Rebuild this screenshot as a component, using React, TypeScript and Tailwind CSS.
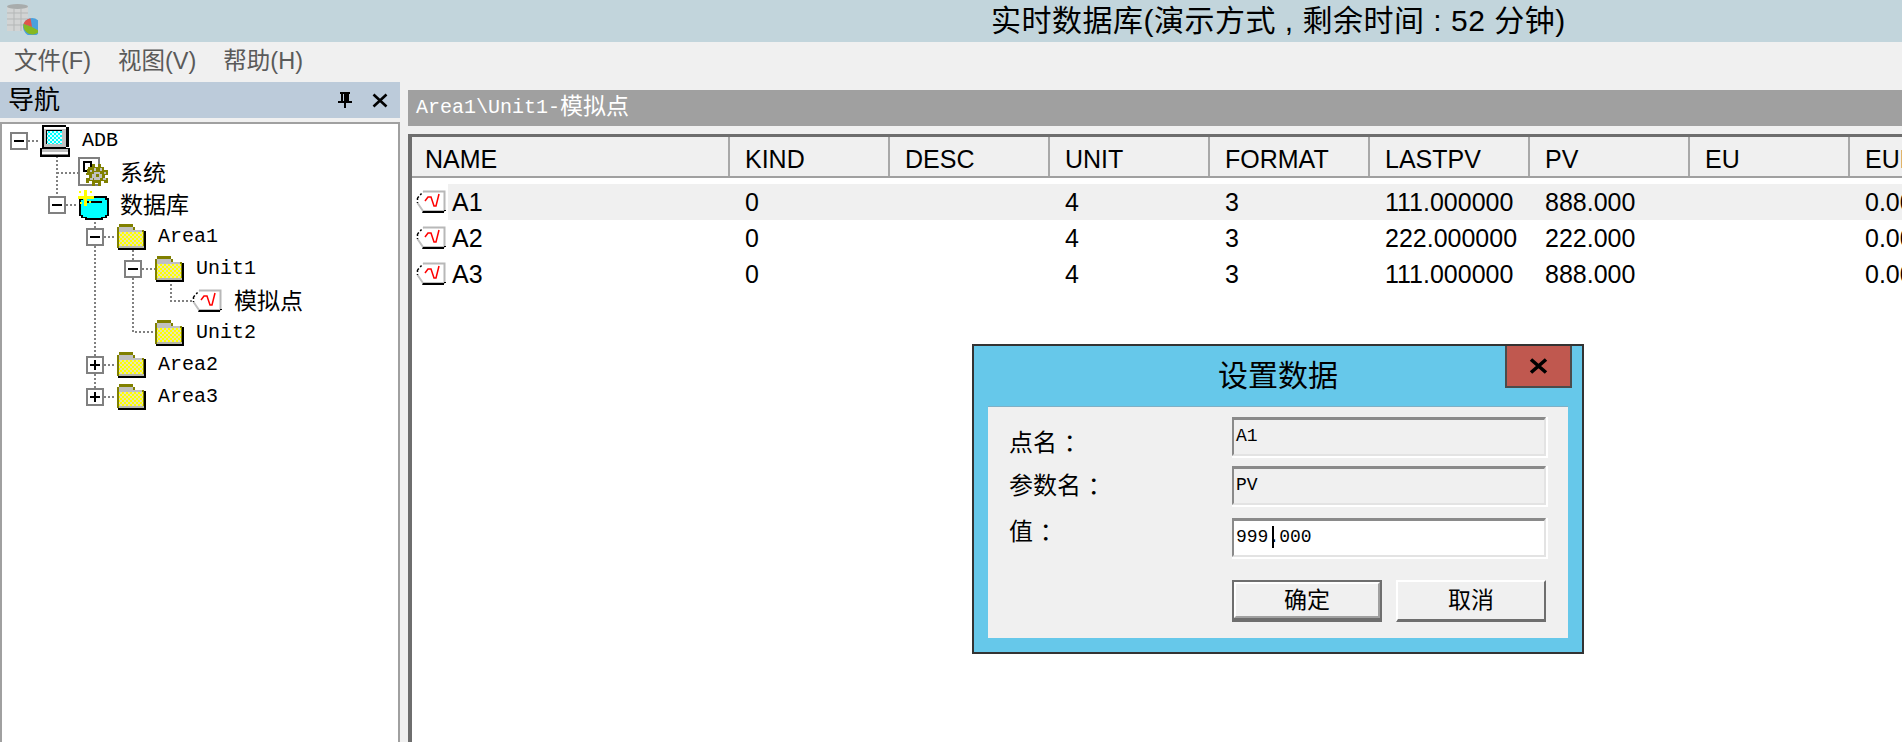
const sans = "font-['Liberation_Sans','Noto_Sans_CJK_SC',sans-serif]";
const mono = "font-['Liberation_Mono','Noto_Sans_CJK_SC',monospace]";

const columns = ["KIND", "DESC", "UNIT", "FORMAT", "LASTPV", "PV", "EU", "EULO"];
const rows = [
  { name: "A1", cells: ["0", "", "4", "3", "111.000000", "888.000", "", "0.000000"] },
  { name: "A2", cells: ["0", "", "4", "3", "222.000000", "222.000", "", "0.000000"] },
  { name: "A3", cells: ["0", "", "4", "3", "111.000000", "888.000", "", "0.000000"] },
];

function Dither({ id, a, b }: { id: string; a: string; b: string }) {
  return (
    <pattern id={id} width="4" height="4" patternUnits="userSpaceOnUse">
      <rect width="4" height="4" fill={a} />
      <rect width="2" height="2" fill={b} />
      <rect x="2" y="2" width="2" height="2" fill={b} />
    </pattern>
  );
}

function AppIcon() {
  return (
    <svg width="32" height="32" viewBox="0 0 32 32" className="blur-[0.7px]">
      <path d="M1 3h21v25H1z" fill="#d2d4d4" />
      <ellipse cx="11.500" cy="3.500" rx="10.500" ry="2.500" fill="#a8acac" />
      <path d="M1 10h21M1 16h21M1 22h21M8 6v22M15 6v22" stroke="#b4b7b7" strokeWidth="1" />
      <circle cx="26" cy="24" r="9" fill="#4aa0dc" />
      <path d="M26 24l-8.500-3a9 9 0 0 1 7-5.800z" fill="#e0554a" />
      <path d="M26 24l-8.500-3a9 9 0 0 0 16 7z" fill="#86b821" />
    </svg>
  );
}

function ComputerIcon() {
  return (
    <svg width="30" height="32" viewBox="0 0 30 32" shapeRendering="crispEdges">
      <defs>
        <Dither id="screen" a="#00ffff" b="#d8ffff" />
      </defs>
      <path d="M2 0h24v2h3v20h-3v2H2z" fill="#000" />
      <path d="M4 2h22v20H4z" fill="#c0c0c0" />
      <path d="M4 2h22v2H4z" fill="#ffffff" />
      <path d="M6 5h16v14H6z" fill="#000" />
      <path d="M7 6h15v13H7z" fill="url(#screen)" />
      <path d="M0 23h30v9H0z" fill="#000" />
      <path d="M2 24h26v3H2z" fill="#c0c0c0" />
      <path d="M2 27h26v2H2z" fill="#ffffff" />
      <path d="M2 29h26v1H2z" fill="#808080" />
    </svg>
  );
}

function SystemIcon() {
  return (
    <svg width="30" height="32" viewBox="0 0 30 32" shapeRendering="crispEdges">
      <path d="M1 1h20v27H1z" fill="#fff" stroke="#808080" strokeWidth="2" />
      <path d="M6 5h7v9H6z" fill="#fff" stroke="#000" strokeWidth="2" />
      <path
        d="M10 10h4v-3h3v3h3v-3h3v3h3v3h4v5h-3v3h3v5h-4v-2h-3v5h-3v-3h-3v3h-3v-5h-3v2h-3v-5h3v-3h-3z"
        fill="#808000"
      />
      <path d="M12 13h2v2h-2zM16 11h2v3h-2zM22 11h2v3h-2zM26 15h2v2h-2zM12 21h3v2h-3zM25 21h3v2h-3z" fill="#c0c0c0" />
      <path d="M16 15h6v2h2v4h-2v2h-6v-2h-2v-4h2z" fill="#c0c0c0" />
      <path d="M18 17h3v3h-3z" fill="#808000" />
    </svg>
  );
}

function DatabaseIcon() {
  return (
    <svg width="32" height="30" viewBox="0 0 32 30" shapeRendering="crispEdges">
      <path d="M3 6h26v2h2v18h-2v2h-4v2H7v-2H3v-2H1V8h2z" fill="#000" />
      <path d="M5 8h22v2h2v15h-2v2h-4v1H9v-1H5v-2H3V10h2z" fill="#00ffff" />
      <path d="M9 11h15v2H9z" fill="#000" />
      <path d="M6 0h3v6h7v3H9v7H6V9H0V6h6z" fill="#ffff00" />
      <path d="M1 1h2v2H1zM12 1h2v2h-2zM2 12h2v2H2zM11 11h2v2h-2z" fill="#ffff00" />
    </svg>
  );
}

function FolderIcon({ id }: { id: string }) {
  return (
    <svg width="30" height="26" viewBox="0 0 30 26" shapeRendering="crispEdges">
      <defs>
        <Dither id={id} a="#ffff00" b="#e4e4b4" />
      </defs>
      <path d="M1 3h2V0h14v3h2v3h9v18H1z" fill="#808000" />
      <path d="M3 3h14v3H3z" fill="#c0c0c0" />
      <path d="M3 6h23v2H3z" fill="#c0c0c0" />
      <path d="M3 8h24v14H3z" fill={`url(#${id})`} />
      <path d="M3 22h25v2H3z" fill="#b8b8a8" />
      <path d="M2 24h28v2H2zM28 7h2v19h-2z" fill="#000" />
    </svg>
  );
}

function PointIcon() {
  return (
    <svg width="30" height="24" viewBox="0 0 30 24" className="shrink-0">
      <path d="M7 2h21v18H7L1.500 13V8z" fill="#fff" />
      <path d="M7 1.500h21.500v18.500" fill="none" stroke="#b8b8b8" strokeWidth="2" />
      <path d="M1.500 8L7 2M1.500 8v5" fill="none" stroke="#000" strokeWidth="1.500" strokeDasharray="2 2" />
      <path d="M1.500 13L7 21h22" fill="none" stroke="#c0c0c0" strokeWidth="2" />
      <path d="M6 23h24v-2H7z M28 20h2v3h-2z" fill="#000" />
      <path d="M9 11l3-4h3l3 9h2l3-12" fill="none" stroke="#f00" strokeWidth="1.500" />
    </svg>
  );
}

function Expander({ open }: { open: boolean }) {
  return (
    <svg width="18" height="18" viewBox="0 0 18 18" shapeRendering="crispEdges" className="shrink-0">
      <rect x="1" y="1" width="16" height="16" fill="#fff" stroke="#808080" strokeWidth="2" />
      <path d="M4 8h10v2H4z" fill="#000" />
      {!open && <path d="M8 4h2v10H8z" fill="#000" />}
    </svg>
  );
}

function TreeRow({
  pad,
  icon,
  label,
  latin,
  expander,
}: {
  pad: string;
  icon: React.ReactNode;
  label: string;
  latin?: boolean;
  expander?: "open" | "closed";
}) {
  return (
    <div className={`flex h-8 items-center ${pad}`}>
      <div className="w-[30px] shrink-0">{expander && <Expander open={expander === "open"} />}</div>
      <div className="w-[42px] shrink-0">{icon}</div>
      <span className={latin ? `${mono} text-[20px]` : `${sans} text-[23px] leading-none`}>{label}</span>
    </div>
  );
}

function Tree() {
  return (
    <div className="relative min-h-0 flex-1 overflow-hidden border-x-2 border-t-2 border-[#a0a0a0] bg-white pt-[1px] text-black">
      <svg className="absolute left-0 top-0" width="396" height="300" fill="none" stroke="#808080" strokeWidth="2" strokeDasharray="2 2">
        <path d="M26 17h12M55 32v38M55 49h21M64 81h12M93 94v15M102 113h12M93 122v114M102 241h12M93 250v18M102 273h12M131 126v15M140 145h13M131 154v54h22M169 160v17h21" />
      </svg>
      <div className="relative">
        <TreeRow pad="pl-[8px]" expander="open" icon={<ComputerIcon />} label="ADB" latin />
        <TreeRow pad="pl-[46px]" icon={<SystemIcon />} label="系统" />
        <TreeRow pad="pl-[46px]" expander="open" icon={<DatabaseIcon />} label="数据库" />
        <TreeRow pad="pl-[84px]" expander="open" icon={<FolderIcon id="f1" />} label="Area1" latin />
        <TreeRow pad="pl-[122px]" expander="open" icon={<FolderIcon id="f2" />} label="Unit1" latin />
        <TreeRow pad="pl-[160px]" icon={<PointIcon />} label="模拟点" />
        <TreeRow pad="pl-[122px]" icon={<FolderIcon id="f3" />} label="Unit2" latin />
        <TreeRow pad="pl-[84px]" expander="closed" icon={<FolderIcon id="f4" />} label="Area2" latin />
        <TreeRow pad="pl-[84px]" expander="closed" icon={<FolderIcon id="f5" />} label="Area3" latin />
      </div>
    </div>
  );
}

function NavPanel() {
  return (
    <aside className="flex w-[400px] shrink-0 flex-col">
      <div className={`flex h-9 shrink-0 items-center justify-between bg-[#bccbda] pl-2 pr-3 text-[26px] text-black ${sans}`}>
        <span className="leading-none">导航</span>
        <div className="flex items-center gap-5">
          <svg width="14" height="16" viewBox="0 0 14 16" shapeRendering="crispEdges">
            <path d="M2 0h10v2h-1v7h3v2H8v5H6v-5H0V9h3V2H2zM5 2v7h1V2z" fill="#000" fillRule="evenodd" />
          </svg>
          <svg width="16" height="15" viewBox="0 0 16 15">
            <path d="M1.500 1.500l13 12M14.500 1.500l-13 12" stroke="#000" strokeWidth="2.600" />
          </svg>
        </div>
      </div>
      <div className="h-1 shrink-0" />
      <Tree />
    </aside>
  );
}

function PointTable() {
  return (
    <div className="min-h-0 flex-1 overflow-hidden border-l-4 border-t-[3px] border-[#6e6e6e] bg-white text-[25px] text-black">
      <div className="flex h-[41px] w-max border-b-2 border-[#a0a0a0] bg-[#f0f0f0] leading-[44px]">
        <div className="w-[318px] shrink-0 border-r-2 border-[#a8a8a8] pl-[13px]">NAME</div>
        {columns.map((c) => (
          <div key={c} className="w-[160px] shrink-0 border-r-2 border-[#a8a8a8] pl-[15px]">
            {c}
          </div>
        ))}
      </div>
      <div className="mt-[6px]">
        {rows.map((r, i) => (
          <div key={r.name} className="flex h-9 w-max items-center">
            <div className="flex w-[36px] shrink-0 pl-[4px]">
              <PointIcon />
            </div>
            <div className={`flex h-full items-center leading-9 ${i === 0 ? "bg-[#f0f0f0]" : ""}`}>
              <div className="w-[282px] shrink-0 pl-[4px]">{r.name}</div>
              {r.cells.map((v, j) => (
                <div key={j} className="h-9 w-[160px] shrink-0 pl-[15px]">
                  {v}
                </div>
              ))}
            </div>
          </div>
        ))}
      </div>
    </div>
  );
}

function Field({ value, active }: { value: React.ReactNode; active?: boolean }) {
  return (
    <div className={`h-[41px] w-[316px] border-b-2 border-r-2 border-white ${mono} text-[18px] leading-[32px] text-black`}>
      <div
        className={`h-full border-b-2 border-l-2 border-r-2 border-t-[3px] border-b-[#e3e3e3] border-l-[#8a8a8a] border-r-[#e3e3e3] border-t-[#8a8a8a] pl-[2px] ${
          active ? "bg-white" : "bg-[#f0f0f0]"
        }`}
      >
        {value}
      </div>
    </div>
  );
}

function DialogButton({ label, primary }: { label: string; primary?: boolean }) {
  if (primary) {
    return (
      <div className="h-[42px] w-[150px] border-2 border-b-[4px] border-[#6e6e6e] text-[23px] leading-none text-black">
        <div className="flex h-full items-center justify-center border-b-2 border-l-2 border-r-2 border-t-2 border-b-[#a0a0a0] border-l-white border-r-[#a0a0a0] border-t-white bg-[#f0f0f0]">
          {label}
        </div>
      </div>
    );
  }
  return (
    <div className="flex h-[42px] w-[150px] items-center justify-center border-2 border-b-[3px] border-b-[#6e6e6e] border-l-white border-r-[#6e6e6e] border-t-white bg-[#f0f0f0] text-[23px] leading-none text-black">
      {label}
    </div>
  );
}

function SetDialog() {
  return (
    <div className={`absolute left-[972px] top-[344px] w-[612px] border-2 border-[#333] bg-[#66c8ea] ${sans}`}>
      <div className="relative h-[60px] text-center text-[30px] leading-[60px] text-black">
        设置数据
        <div className="absolute right-[10px] top-0 flex h-[42px] w-[67px] items-center justify-center border-2 border-t-0 border-[#4b4b4b] bg-[#c0584f]">
          <svg width="19" height="16" viewBox="0 0 19 16">
            <path d="M2 1.500l15 13M17 1.500l-15 13" stroke="#000" strokeWidth="3.600" />
          </svg>
        </div>
      </div>
      <div className="mx-[14px] mb-[14px] h-[232px] border-t border-[#7fb0c6] bg-[#f0f0f0] text-[24px] text-black">
        <div className="flex">
          <div className="flex w-[244px] shrink-0 flex-col pl-[21px] pt-[24px] leading-none">
            <span>点名 ：</span>
            <span className="mt-[19px]">参数名 ：</span>
            <span className="mt-[22px]">值 ：</span>
          </div>
          <div className="flex flex-col pt-[10px]">
            <Field value="A1" />
            <div className="mt-[8px]">
              <Field value="PV" />
            </div>
            <div className="mt-[11px]">
              <Field
                active
                value={
                  <>
                    999
                    <span className="ml-[4px] inline-block h-[22px] w-0 border-l-2 border-black align-middle" />
                    <span className="-ml-[6px]">.000</span>
                  </>
                }
              />
            </div>
            <div className="mt-[21px] flex gap-[14px]">
              <DialogButton label="确定" primary />
              <DialogButton label="取消" />
            </div>
          </div>
        </div>
      </div>
    </div>
  );
}

export default function App() {
  return (
    <div className={`relative flex h-screen w-full flex-col overflow-hidden bg-[#f0f0f0] ${sans}`}>
      <header className="relative flex h-[42px] shrink-0 items-center bg-[#c2d5dc] pl-[991px] text-[30px] tracking-[0.5px] text-black">
        <div className="absolute left-[6px] top-[3px]">
          <AppIcon />
        </div>
        <span className="whitespace-nowrap leading-none">实时数据库(演示方式 , 剩余时间 : 52 分钟)</span>
      </header>
      <nav className="flex h-10 shrink-0 items-center gap-[27px] pl-[14px] text-[23.500px] text-[#5a5a5a]">
        <span>文件(F)</span>
        <span>视图(V)</span>
        <span>帮助(H)</span>
      </nav>
      <div className="flex min-h-0 flex-1">
        <NavPanel />
        <main className="flex min-w-0 flex-1 flex-col pl-2 pt-2">
          <div className={`flex h-9 shrink-0 items-center bg-[#a0a0a0] pl-2 text-white ${mono} text-[20px]`}>
            Area1\Unit1-<span className="text-[23px]">模拟点</span>
          </div>
          <div className="h-2 shrink-0" />
          <PointTable />
        </main>
      </div>
      <SetDialog />
    </div>
  );
}
